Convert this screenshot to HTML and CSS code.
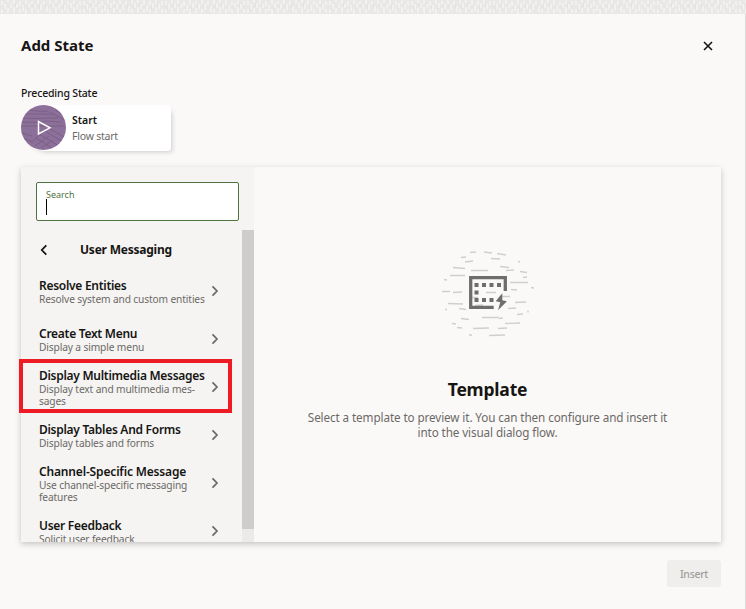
FILE: index.html
```html
<!DOCTYPE html>
<html lang="en">
<head>
<meta charset="utf-8">
<title>Add State</title>
<link rel="stylesheet" href="styles.css">
</head>
<body>
<svg class="texture" width="746" height="14" aria-hidden="true">
  <defs>
    <pattern id="grain" width="82" height="14" patternUnits="userSpaceOnUse">
      <rect width="82" height="14" fill="#e9e8e6"/>
      <path d="M2 1v4M5 4v5M8 0v3M8 8v5M11 3v5M14 7v6M14 0v4M17 4v4M20 1v5M20 9v4M23 5v6M26 0v4M26 9v5M29 3v5M32 8v5M32 1v3M35 4v5M38 0v4M38 9v4M41 4v6M44 1v4M47 6v6M50 0v4M50 9v4M53 3v5M56 7v6M56 0v3M59 4v5M62 0v5M62 9v4M65 5v6M68 1v4M68 9v4M71 3v5M74 7v6M74 0v4M77 4v5M80 1v4M80 9v4M2 9v4" stroke="#f7f6f4" stroke-width="1.3"/>
      <path d="M3.500 6v5M9.500 3v4M15.500 3v4M21.500 5v4M27.500 6v5M33.500 4v4M39.500 4v5M45.500 3v5M51.500 5v4M57.500 3v5M63.500 4v5M69.500 6v4M75.500 3v5" stroke="#e3e2e0"/>
    </pattern>
  </defs>
  <rect width="746" height="14" fill="url(#grain)"/>
</svg>
<main class="drawer">
  <header class="header">
    <h1>Add State</h1>
    <svg class="close" width="10" height="10" viewBox="0 0 10 10"><path d="M1 1l8 8M9 1l-8 8" stroke="#161513" stroke-width="1.6"/></svg>
  </header>
  <div class="label">Preceding State</div>
  <div class="state">
    <svg class="start-icon" width="46" height="46" viewBox="0 0 46 46">
      <defs><clipPath id="disc"><circle cx="22.500" cy="22.500" r="22.500"/></clipPath></defs>
      <g clip-path="url(#disc)" fill="none">
        <path d="M0 0h46v46H0z" fill="#8d7099"/>
        <path d="M8 5q13 2 19 1M4 9h28M2 13q16 1 23 0h12M1 17q15 1 25-1l14 1M0 21h44M-3 27l14 4M-2 32l14 5M3 39l10 4M27 23l18 10M22 25l22 13M18 29l20 12M15 33l16 10M12 36l10-9M14 41l14-10M20 43l12-8M29 7l16 9M34 5l12 7" stroke="#775d85" stroke-width=".9"/>
      </g>
      <path d="M17.500 16.500v12.500l11.500-6.200z" fill="none" stroke="#fff" stroke-width="1.5"/>
    </svg>
    <div class="state-text"><strong>Start</strong><span>Flow start</span></div>
  </div>
  <section class="picker">
    <aside class="side">
      <div class="search"><span>Search</span><i class="caret"></i></div>
      <div class="scroller">
        <div class="list">
          <div class="list-head">
            <svg width="8" height="12" viewBox="0 0 8 12"><path d="M6.300 1.300L1.800 6l4.500 4.700" fill="none" stroke="#161513" stroke-width="1.800"/></svg>
            <h2>User Messaging</h2>
          </div>
          <div class="item"><div><b>Resolve Entities</b><p>Resolve system and custom entities</p></div><svg class="chev" viewBox="0 0 8 12"><path d="M1.500 1.300L6 6l-4.500 4.700"/></svg></div>
          <div class="item"><div><b>Create Text Menu</b><p>Display a simple menu</p></div><svg class="chev" viewBox="0 0 8 12"><path d="M1.500 1.300L6 6l-4.500 4.700"/></svg></div>
          <div class="item marked"><div><b>Display Multimedia Messages</b><p>Display text and multimedia mes-<br>sages</p></div><svg class="chev" viewBox="0 0 8 12"><path d="M1.500 1.300L6 6l-4.500 4.700"/></svg></div>
          <div class="item"><div><b>Display Tables And Forms</b><p>Display tables and forms</p></div><svg class="chev" viewBox="0 0 8 12"><path d="M1.500 1.300L6 6l-4.500 4.700"/></svg></div>
          <div class="item"><div><b class="wide">Channel-Specific Message</b><p>Use channel-specific messaging<br>features</p></div><svg class="chev" viewBox="0 0 8 12"><path d="M1.500 1.300L6 6l-4.500 4.700"/></svg></div>
          <div class="item"><div><b>User Feedback</b><p>Solicit user feedback</p></div><svg class="chev" viewBox="0 0 8 12"><path d="M1.500 1.300L6 6l-4.500 4.700"/></svg></div>
        </div>
        <div class="track"><div class="thumb"></div></div>
      </div>
    </aside>
    <div class="preview">
      <svg class="art" width="101" height="90" viewBox="0 0 101 90" fill="none">
        <path transform="translate(2 1.500)" d="M31 3l6-.5M45 2.500l8 1M58 4l9 1.500M22 8l5-.5M52 9l9 .5M26 12.500l8-1M14 18l12 1M32 21h17M67 21l8-.5M79 12l2 .5M61 17l9 1M11 26h15M81 22l7 1M84 28l4-.5M5 30l3 .5M71 33h18M3 42h8M14 43l9-.5M47 43h10M72 40l6 .5M92 38l3 .5M9 54l15 .5M33 48h6M60 47h11M76 53l11-.5M36 56l8-.5M20 59l7 1M6 60h2M22 69l8 1M43 68h17M78 65l6-.5M89 61v2M13 74l4 .5M18 78l5 .5M34 79l16-.5M59 79l9-.5M66 74l15-.5M30 85.500h3M50 86l16-.5M69 59l8-.5M60 69l4-.5" stroke="#d0cfcd" stroke-width="1.300"/>
        <path d="M56.700 59.300H33.700V29.700h34.600V43" stroke="#6f6d6b" stroke-width="3.300"/>
        <path d="M37.500 35h4v4h-4zM45 35h4v4h-4zM52.500 35h4v4h-4zM60 35h4v4h-4zM37.500 42.500h4v4h-4zM37.500 50h4v4h-4zM45 50h4v4h-4zM52.500 50h4v4h-4zM65.300 45.300L58.700 53.300l4.600 1L61 62.300l8.900-9-4.600-1z" fill="#6f6d6b"/>
      </svg>
      <h3>Template</h3>
      <p class="desc">Select a template to preview it. You can then configure and insert it<br>into the visual dialog flow.</p>
    </div>
  </section>
  <footer><button disabled>Insert</button></footer>
</main>
</body>
</html>
```
FILE: styles.css
```css
*, *::after { box-sizing: border-box; }
body { margin: 0; height: 609px; overflow: hidden; background: #fbf9f8; color: #161513; font-family: "Noto Sans", sans-serif; }
h1, h2, h3, p { margin: 0; }
svg { display: block; flex: none; }
.texture { height: 14px; }
.drawer { height: 595px; padding: 0 24px 0 21px; border-right: 1px solid #dcdbd9; white-space: nowrap; }
.header { display: flex; justify-content: space-between; align-items: center; height: 63px; padding-right: 8px; }
h1 { padding-bottom: 2px; font-size: 15px; line-height: 20px; font-weight: 700; }
.label { height: 28px; padding-top: 8px; font-size: 10.500px; line-height: 16px; font-weight: 500; letter-spacing: -.17px; }
.state { display: flex; width: 150px; height: 46px; border-radius: 23px 4px 4px 23px; background: linear-gradient(90deg, transparent 22px, #fff 22px); box-shadow: 4px 4px 5px -3px rgba(0,0,0,.18); }
.state-text { display: flex; flex-direction: column; padding: 7px 0 0 5px; font-size: 10.500px; line-height: 16px; }
.state-text strong { font-weight: 600; }
.state-text span { color: #6b6966; letter-spacing: -.22px; }
.picker { display: flex; height: 375px; margin-top: 16px; box-shadow: 0 2px 6px rgba(0,0,0,.22); background: #fbf9f8; }
.side { width: 233px; background: #f5f4f2; }
.search { width: 203px; height: 39px; margin: 15px 15px 9px; border: 1px solid #4f7441; border-radius: 2px; background: #fff; padding: 7px 9px 0; font-size: 9px; line-height: 10px; color: #4f7441; }
.caret { display: block; width: 1px; height: 16px; margin-top: -1px; background: #000; }
.scroller { display: flex; height: 312px; margin-left: -2px; padding-left: 2px; overflow: hidden; }
.list { width: 221px; }
.list-head { display: flex; align-items: center; height: 37px; padding: 2px 0 0 19px; }
h2 { margin-left: 32px; font-size: 12px; line-height: 18px; font-weight: 700; letter-spacing: -.22px; }
.item { display: flex; justify-content: space-between; align-items: center; height: 48px; padding: 0 23px 0 18px; position: relative; }
.item b { display: block; font-size: 12px; line-height: 14px; font-weight: 600; letter-spacing: -.28px; }
.item b.wide { letter-spacing: -.16px; }
.item p { font-size: 10.200px; line-height: 12px; color: #6b6966; letter-spacing: -.13px; }
.item > div { padding-top: 1px; width: 170px; }
.chev { width: 8px; height: 12px; fill: none; stroke: #6b6966; stroke-width: 1.700; }
.marked::after { content: ""; position: absolute; left: -2px; top: -4px; width: 213px; height: 54px; border: 4px solid #ed1c24; }
.track { width: 12px; background: #ebeae8; }
.thumb { height: 299px; background: #cecdcb; }
.preview { flex: 1; display: flex; flex-direction: column; align-items: center; padding-top: 81px; }
h3 { margin-top: 39px; font-size: 17.500px; line-height: 24px; font-weight: 700; letter-spacing: -.2px; }
.desc { margin-top: 9px; font-size: 11.700px; line-height: 15px; text-align: center; color: #6b6966; letter-spacing: -.1px; }
footer { display: flex; justify-content: flex-end; padding-top: 18px; }
button { width: 54px; height: 27px; padding: 0; border: 0; border-radius: 3px; background: #efeeec; color: #a09e9c; font: 500 10.500px "Noto Sans", sans-serif; letter-spacing: -.3px; }
```
